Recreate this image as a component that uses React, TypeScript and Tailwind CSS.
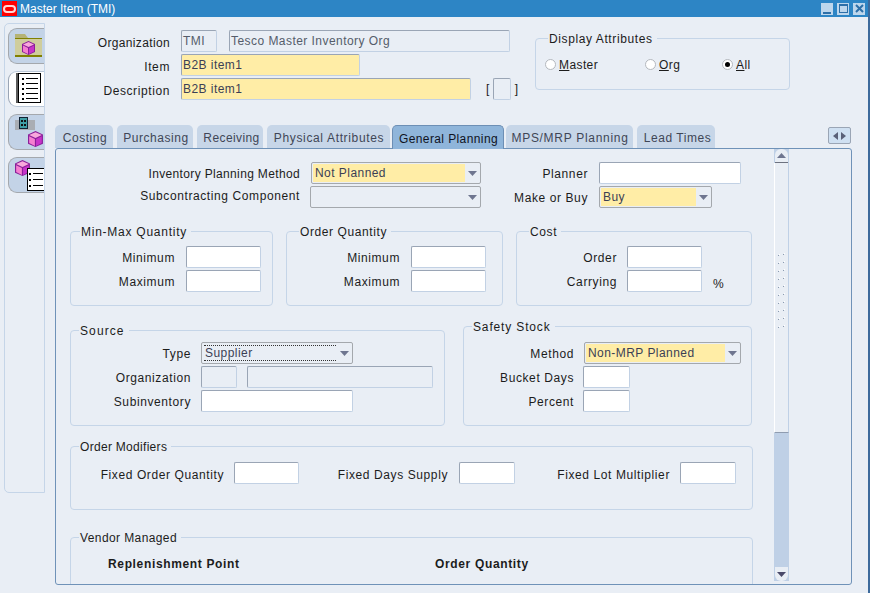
const fontCls = "font-['Liberation_Sans',Arial,sans-serif] text-[12px] tracking-[0.45px] text-[#1c1c1c]";

function Caret({ dark }: { dark?: boolean }) {
  return (
    <svg width="9" height="5" viewBox="0 0 9 5" className={dark ? "text-[#4a4a6a]" : "text-[#6f7690]"}>
      <path d="M0 0h9L4.5 5z" fill="currentColor" />
    </svg>
  );
}

function Field({ w, value, kind = "white" }: { w: string; value?: string; kind?: "white" | "yellow" | "off" }) {
  const bg = kind === "yellow" ? "bg-[#ffeda6]" : kind === "off" ? "bg-[#e9eef5]" : "bg-white";
  const text = kind === "off" ? "text-[#555d6b]" : "text-[#3b3f55]";
  return (
    <div
      className={`${w} ${bg} ${text} h-[22px] shrink-0 rounded-[2px] border border-[#c2d1e4] border-l-[#9aa5b5] border-t-[#9aa5b5] pl-[1px] leading-[20px] whitespace-nowrap overflow-hidden`}
    >
      {value}
    </div>
  );
}

function Select({ w, value, kind = "off", focus }: { w: string; value?: string; kind?: "off" | "yellow"; focus?: boolean }) {
  return (
    <div className={`${w} h-[22px] shrink-0 flex rounded-[2px] border border-[#a4a8ad] bg-[#e9eef5] text-[#3b3f55] p-[1px]`}>
      <div className={`flex-1 whitespace-nowrap overflow-hidden ${kind === "yellow" ? "bg-[#ffeda6]" : ""} ${focus ? "mx-[1px] my-[1px] border-y border-dotted border-[#333] leading-[15px] pl-[1px]" : "leading-[19px] pl-[2px]"}`}>
        {value}
      </div>
      <div className="w-[14px] flex items-center justify-center">
        <Caret />
      </div>
    </div>
  );
}

function Label({ w, lead = "leading-[24px]", track = "tracking-[0.6px]", children }: { w: string; lead?: string; track?: string; children: string }) {
  return <div className={`${w} ${lead} ${track} h-[22px] shrink-0 text-right whitespace-nowrap`}>{children}</div>;
}

function Group({ title, w, h, left = "left-[9px]", track = "tracking-[0.6px]", className = "", children }: { title: string; w: string; h: string; left?: string; track?: string; className?: string; children?: React.ReactNode }) {
  return (
    <div className={`relative ${w} ${h} shrink-0 rounded-[4px] border border-[#c5d5e8] ${className}`}>
      <div className={`absolute -top-[8px] ${left} ${track} bg-[#e9eef5] px-[1px] pr-[4px] leading-[16px] whitespace-nowrap`}>{title}</div>
      {children}
    </div>
  );
}

function Radio({ on }: { on?: boolean }) {
  return (
    <span className="mb-[2px] w-[11px] h-[11px] rounded-full border border-[#b4b8be] bg-white flex items-center justify-center shrink-0">
      {on && <span className="w-[5px] h-[5px] rounded-full bg-black" />}
    </span>
  );
}

function Tab({ w, label, active, extra = "tracking-[0.55px]" }: { w: string; label: string; active?: boolean; extra?: string }) {
  return (
    <div
      className={`${w} ${extra} shrink-0 rounded-t-[5px] text-center whitespace-nowrap ${
        active
          ? "bg-[#8fb5da] border-x border-t border-[#6d8fb5] h-[24px] leading-[26px] relative z-10 -mb-px text-[#10131f]"
          : "bg-[#c7d6e8] h-[23px] leading-[27px] text-[#3f4656]"
      }`}
    >
      {label}
    </div>
  );
}

function Cube({ x, y, s = 1 }: { x: number; y: number; s?: number }) {
  return (
    <g transform={`translate(${x} ${y}) scale(${s})`}>
      <path d="M6.5 0 13 3v8l-6.5 3L0 11V3z" fill="#8a1f9a" />
      <path d="M6.5 1 12 3.5 6.5 6 1 3.5z" fill="#f9a8dc" />
      <path d="M1 4.5 6 7v6l-5-2.5z" fill="#f57fd0" />
      <path d="M7 7l5-2.5v6L7 13z" fill="#c733c8" />
    </g>
  );
}

function ListLines({ x, y, n, gap, w }: { x: number; y: number; n: number; gap: number; w: number }) {
  return (
    <>
      {Array.from({ length: n }).map((_, i) => (
        <g key={i}>
          <rect x={x} y={y + i * gap} width="2" height="2" fill="#000" />
          <rect x={x + 4} y={y + i * gap} width={w} height="1" fill="#000" />
        </g>
      ))}
    </>
  );
}

function SideTab({ active, children }: { active?: boolean; children: React.ReactNode }) {
  return (
    <div
      className={`ml-[3px] w-[36px] h-[36px] rounded-l-[9px] border-l border-y overflow-hidden ${
        active ? "bg-white border-[#b9c6d6] border-l-[#9aa5b5]" : "bg-[#c3d3e7] border-[#a4a8ad]"
      }`}
    >
      {children}
    </div>
  );
}

export default function App() {
  return (
    <div className={`w-[876px] h-[593px] bg-white overflow-hidden ${fontCls}`}>
      <div className="w-[870px] h-[593px] bg-[#e9eef5] border-r-2 border-[#3d6a9c] flex flex-col">
        {/* title bar */}
        <div className="h-[17px] bg-[#2d85c5] flex items-center shrink-0">
          <div className="ml-[2px] w-[15px] h-[15px] bg-[#ff0000] flex items-center justify-center">
            <div className="w-[13px] h-[8px] rounded-full border-2 border-[#ffd8d8]" />
          </div>
          <span className="ml-[3px] text-white tracking-[0px] leading-[16px]">Master Item (TMI)</span>
          <div className="ml-auto mr-[3px] flex gap-[4px]">
            <div className="w-[12px] h-[12px] bg-[#bdd6ec] flex items-end justify-center pb-[1px]">
              <div className="w-[8px] h-[2px] bg-[#2d6fa8]" />
            </div>
            <div className="w-[12px] h-[12px] bg-[#bdd6ec] flex items-center justify-center">
              <div className="w-[9px] h-[9px] border border-t-2 border-[#2d6fa8]" />
            </div>
            <div className="w-[12px] h-[12px] bg-[#bdd6ec] flex items-center justify-center">
              <svg width="9" height="9" viewBox="0 0 9 9">
                <path d="M1 1l7 7M8 1L1 8" stroke="#2d6fa8" strokeWidth="2" />
              </svg>
            </div>
          </div>
        </div>

        <div className="flex flex-1 min-h-0">
          {/* left rail */}
          <div className="ml-[4px] mt-[6px] w-[41px] h-[470px] shrink-0 rounded-l-[5px] border border-[#c5d5e8] pt-[4px] flex flex-col gap-[7px]">
            <SideTab>
              <svg width="35" height="34" viewBox="0 0 35 34">
                <path d="M6 5h10l3 4H6z" fill="#b5b377" />
                <rect x="6" y="9" width="27" height="1" fill="#808000" />
                <rect x="6" y="10" width="27" height="16" fill="#cfcd9c" />
                <rect x="6" y="26" width="27" height="2" fill="#808000" />
                <Cube x={13} y={12} />
              </svg>
            </SideTab>
            <SideTab active>
              <svg width="35" height="34" viewBox="0 0 35 34">
                <rect x="7" y="1" width="2" height="30" fill="#5a5a5a" />
                <rect x="9.5" y="1.5" width="22" height="29" fill="#fff" stroke="#000" strokeWidth="1" />
                <ListLines x={13} y={6} n={5} gap={5} w={12} />
              </svg>
            </SideTab>
            <SideTab>
              <svg width="35" height="34" viewBox="0 0 35 34">
                <rect x="6" y="5" width="20" height="10" fill="#a9adb3" />
                <rect x="10.5" y="2.5" width="8" height="11" fill="#3f9ea5" stroke="#123" strokeWidth="1" />
                <rect x="12" y="5" width="2" height="2" fill="#111" />
                <rect x="15" y="5" width="2" height="2" fill="#111" />
                <rect x="12" y="9" width="2" height="2" fill="#111" />
                <rect x="15" y="9" width="2" height="2" fill="#111" />
                <Cube x={19} y={16} s={1.15} />
              </svg>
            </SideTab>
            <SideTab>
              <svg width="35" height="34" viewBox="0 0 35 34">
                <Cube x={6} y={2} s={1.15} />
                <rect x="18.5" y="10.5" width="17" height="22" fill="#fff" stroke="#000" strokeWidth="1" />
                <ListLines x={20} y={15} n={3} gap={6} w={10} />
              </svg>
            </SideTab>
          </div>

          {/* main */}
          <div className="ml-[10px] w-[797px] shrink-0 flex flex-col">
            {/* header */}
            <div className="h-[108px] shrink-0 flex">
              <div className="pt-[13px] flex flex-col gap-[2px] w-[480px] shrink-0">
                <div className="flex">
                  <Label w="w-[115px]" lead="leading-[26px]" track="tracking-[0.35px]">Organization</Label>
                  <div className="ml-[11px] flex gap-[12px]">
                    <Field w="w-[36px]" value="TMI" kind="off" />
                    <Field w="w-[281px]" value="Tesco Master Inventory Org" kind="off" />
                  </div>
                </div>
                <div className="flex">
                  <Label w="w-[115px]" lead="leading-[26px]">Item</Label>
                  <div className="ml-[11px]">
                    <Field w="w-[179px]" value="B2B item1" kind="yellow" />
                  </div>
                </div>
                <div className="flex items-center">
                  <Label w="w-[115px]" lead="leading-[26px]">Description</Label>
                  <div className="ml-[11px]">
                    <Field w="w-[290px]" value="B2B item1" kind="yellow" />
                  </div>
                  <span className="ml-[15px]">[</span>
                  <div className="ml-[3px]">
                    <Field w="w-[18px]" kind="off" />
                  </div>
                  <span className="ml-[4px]">]</span>
                </div>
              </div>
              <Group title="Display Attributes" w="w-[255px]" h="h-[52px]" left="left-[12px]" className="mt-[21px]">
                <div className="pl-[9px] pt-[18px] flex items-center leading-[16px]">
                  <div className="w-[100px] flex items-center gap-[3px]">
                    <Radio />
                    <span className="tracking-[0.4px]"><u>M</u>aster</span>
                  </div>
                  <div className="w-[77px] flex items-center gap-[3px]">
                    <Radio />
                    <span><u>O</u>rg</span>
                  </div>
                  <div className="flex items-center gap-[3px]">
                    <Radio on />
                    <span><u>A</u>ll</span>
                  </div>
                </div>
              </Group>
            </div>

            {/* tabs */}
            <div className="h-[23px] shrink-0 flex items-start">
              <div className="flex gap-[4px]">
                <Tab w="w-[58px]" label="Costing" extra="tracking-[0.55px] pl-[2px]" />
                <Tab w="w-[76px]" label="Purchasing" extra="tracking-[0.55px] pl-[2px]" />
                <Tab w="w-[66px]" label="Receiving" extra="tracking-[0.4px] pl-[3px]" />
                <Tab w="w-[123px]" label="Physical Attributes" extra="tracking-[0.65px] pl-[1px]" />
              </div>
              <div className="ml-[2px]">
                <Tab w="w-[112px]" label="General Planning" active extra="tracking-[0.4px] pl-[1px]" />
              </div>
              <div className="ml-[2px] flex gap-[4px]">
                <Tab w="w-[127px]" label="MPS/MRP Planning" extra="tracking-[0.7px] pl-[1px]" />
                <Tab w="w-[78px]" label="Lead Times" extra="tracking-[0.55px] pl-[3px]" />
              </div>
              <div className="ml-[113px] mt-[2px] w-[23px] h-[17px] rounded-[2px] border border-[#9aa5b5] bg-[#cfe0f2] flex items-center justify-center gap-[1px]">
                <svg width="13" height="8" viewBox="0 0 13 8">
                  <path d="M5 0v8L0 4zM8 0v8l5-4z" fill="#5a6078" />
                </svg>
              </div>
            </div>

            {/* panel */}
            <div className="h-[437px] shrink-0 rounded-[3px] border border-[#6f92b8] flex overflow-hidden">
              <div className="w-[718px] shrink-0 overflow-hidden">
                <div className="pt-[13px] flex flex-col gap-[2px]">
                  <div className="flex">
                    <Label w="w-[244px]" track="tracking-[0.35px]">Inventory Planning Method</Label>
                    <div className="ml-[11px]">
                      <Select w="w-[170px]" value="Not Planned" kind="yellow" />
                    </div>
                    <Label w="w-[107px]">Planner</Label>
                    <div className="ml-[11px]">
                      <Field w="w-[142px]" />
                    </div>
                  </div>
                  <div className="flex">
                    <Label w="w-[244px]" lead="leading-[20px]">Subcontracting Component</Label>
                    <div className="ml-[10px]">
                      <Select w="w-[171px]" />
                    </div>
                    <Label w="w-[107px]">Make or Buy</Label>
                    <div className="ml-[11px]">
                      <Select w="w-[113px]" value="Buy" kind="yellow" />
                    </div>
                  </div>
                </div>

                <div className="mt-[23px] ml-[14px] flex gap-[13px]">
                  <Group title="Min-Max Quantity" w="w-[203px]" h="h-[75px]" track="tracking-[0.75px]">
                    <div className="pt-[14px] flex flex-col gap-[2px]">
                      <div className="flex"><Label w="w-[104px]">Minimum</Label><div className="ml-[11px]"><Field w="w-[75px]" /></div></div>
                      <div className="flex"><Label w="w-[104px]">Maximum</Label><div className="ml-[11px]"><Field w="w-[75px]" /></div></div>
                    </div>
                  </Group>
                  <Group title="Order Quantity" w="w-[217px]" h="h-[75px]" left="left-[12px]">
                    <div className="pt-[14px] flex flex-col gap-[2px]">
                      <div className="flex"><Label w="w-[113px]">Minimum</Label><div className="ml-[11px]"><Field w="w-[75px]" /></div></div>
                      <div className="flex"><Label w="w-[113px]">Maximum</Label><div className="ml-[11px]"><Field w="w-[75px]" /></div></div>
                    </div>
                  </Group>
                  <Group title="Cost" w="w-[236px]" h="h-[75px]" left="left-[12px]">
                    <div className="pt-[14px] flex flex-col gap-[2px]">
                      <div className="flex"><Label w="w-[100px]">Order</Label><div className="ml-[10px]"><Field w="w-[75px]" /></div></div>
                      <div className="flex"><Label w="w-[100px]">Carrying</Label><div className="ml-[10px]"><Field w="w-[75px]" /></div><span className="ml-[11px] leading-[28px]">%</span></div>
                    </div>
                  </Group>
                </div>

                <div className="mt-[20px] ml-[14px] flex gap-[18px] items-end">
                  <Group title="Source" w="w-[375px]" h="h-[96px]" left="left-[8px]" track="tracking-[1.1px]">
                    <div className="pt-[11px] flex flex-col gap-[2px]">
                      <div className="flex"><Label w="w-[120px]">Type</Label><div className="ml-[10px]"><Select w="w-[152px]" value="Supplier" focus /></div></div>
                      <div className="flex"><Label w="w-[120px]">Organization</Label><div className="ml-[10px] flex gap-[10px]"><Field w="w-[36px]" kind="off" /><Field w="w-[186px]" kind="off" /></div></div>
                      <div className="flex"><Label w="w-[120px]">Subinventory</Label><div className="ml-[10px]"><Field w="w-[152px]" /></div></div>
                    </div>
                  </Group>
                  <Group title="Safety Stock" w="w-[289px]" h="h-[100px]" left="left-[8px]" track="tracking-[0.85px]">
                    <div className="pt-[15px] flex flex-col gap-[2px]">
                      <div className="flex"><Label w="w-[110px]">Method</Label><div className="ml-[10px]"><Select w="w-[157px]" value="Non-MRP Planned" kind="yellow" /></div></div>
                      <div className="flex"><Label w="w-[110px]">Bucket Days</Label><div className="ml-[9px]"><Field w="w-[47px]" /></div></div>
                      <div className="flex"><Label w="w-[110px]">Percent</Label><div className="ml-[9px]"><Field w="w-[47px]" /></div></div>
                    </div>
                  </Group>
                </div>

                <div className="mt-[20px] ml-[14px]">
                  <Group title="Order Modifiers" w="w-[683px]" h="h-[64px]" left="left-[8px]" track="tracking-[0.3px]">
                    <div className="pt-[15px] flex">
                      <Label w="w-[153px]" lead="leading-[26px]">Fixed Order Quantity</Label>
                      <div className="ml-[10px]"><Field w="w-[65px]" /></div>
                      <Label w="w-[149px]" lead="leading-[26px]">Fixed Days Supply</Label>
                      <div className="ml-[11px]"><Field w="w-[56px]" /></div>
                      <Label w="w-[155px]" lead="leading-[26px]">Fixed Lot Multiplier</Label>
                      <div className="ml-[10px]"><Field w="w-[56px]" /></div>
                    </div>
                  </Group>
                </div>

                <div className="mt-[27px] ml-[14px]">
                  <Group title="Vendor Managed" w="w-[683px]" h="h-[70px]" left="left-[8px]" track="tracking-[0.4px]">
                    <div className="pt-[15px] pl-[37px] flex font-bold tracking-[0.65px] leading-[22px]">
                      <div className="w-[327px]">Replenishment Point</div>
                      <div>Order Quantity</div>
                    </div>
                  </Group>
                </div>
              </div>

              {/* scrollbar */}
              <div className="w-[15px] shrink-0 h-[432px] flex flex-col bg-[#bfd0e6]">
                <div className="h-[14px] shrink-0 bg-[#e9eef5] mx-[1px] rounded-t-[6px] border-b border-[#6d7280] flex items-center justify-center">
                  <svg width="9" height="5" viewBox="0 0 9 5"><path d="M0 5h9L4.5 0z" fill="#6f7690" /></svg>
                </div>
                <div className="h-[270px] shrink-0 bg-[#e9eef5] border-x border-l-white border-r-[#bfd0e6] border-b border-b-[#8f9cb0] flex items-center justify-center">
                  <svg width="9" height="78" viewBox="0 0 9 78" className="mt-[-12px]">
                    {Array.from({ length: 10 }).map((_, i) => (
                      <g key={i}>
                        <rect x="1" y={i * 8 + 2} width="1" height="1" fill="#8a9ab0" />
                        <rect x="2" y={i * 8 + 1} width="1" height="1" fill="#fff" />
                        <rect x="6" y={i * 8 + 1} width="1" height="1" fill="#8a9ab0" />
                        <rect x="7" y={i * 8} width="1" height="1" fill="#fff" />
                      </g>
                    ))}
                  </svg>
                </div>
                <div className="flex-1" />
                <div className="h-[14px] shrink-0 bg-[#e9eef5] mx-[1px] rounded-b-[6px] flex items-center justify-center">
                  <Caret dark />
                </div>
              </div>
            </div>
          </div>
        </div>
      </div>
    </div>
  );
}
